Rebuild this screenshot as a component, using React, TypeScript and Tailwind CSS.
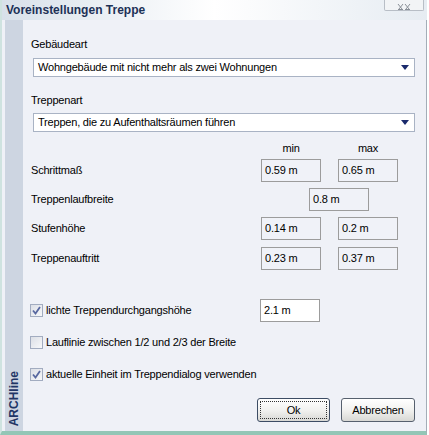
import React from "react";

function Select({ value }: { value: string }) {
  return (
    <div className="ml-[2px] flex h-[19px] w-[382px] items-center border border-[#a9b3c4] bg-white pl-[4px] pr-[5px]">
      <span className="flex-1 leading-[13px]">{value}</span>
      <svg width="8" height="5" viewBox="0 0 8 5">
        <path d="M0 0 H8 L4 5 Z" fill="#1a2a6c" />
      </svg>
    </div>
  );
}

function Box({ value, white, className }: { value: string; white?: boolean; className?: string }) {
  return (
    <div
      className={
        "flex h-[23px] w-[60px] items-center border border-[#9c9c9c] pl-[3px] leading-[13px] " +
        (white ? "bg-white " : "bg-[#f0f2f8] ") +
        (className ?? "")
      }
    >
      {value}
    </div>
  );
}

function Check({ checked, label }: { checked?: boolean; label: string }) {
  return (
    <div className="ml-[-1px] flex h-[13px] items-center gap-[3px]">
      <div className="flex h-[13px] w-[13px] items-center justify-center border border-[#a2acc0] bg-gradient-to-br from-[#dcdfe6] to-[#f7f8fa]">
        {checked && (
          <svg width="9" height="9" viewBox="0 0 9 9">
            <path d="M1 4.5 L3.5 7.5 L8 1" fill="none" stroke="#5868a0" strokeWidth="1.8" />
          </svg>
        )}
      </div>
      <span className="leading-[13px]">{label}</span>
    </div>
  );
}

export default function App() {
  return (
    <div className="h-[435px] w-[429px] bg-white font-['Liberation_Sans',Arial,sans-serif] text-[11px] tracking-[-0.2px] text-black">
      <div className="flex h-[435px] w-[427px] flex-col">
        {/* title bar */}
        <div className="relative h-[20px] border-l-2 border-[#cfe3e0] bg-gradient-to-r from-[#d8e1ea] via-white to-[#e6ecf2] pl-[4px] pt-[2px]">
          <span className="text-[12px] font-bold leading-[14px] tracking-normal text-[#1d3156]">Voreinstellungen Treppe</span>
          <div className="absolute right-[3px] top-0 flex h-[11px] w-[40px] items-end justify-center overflow-hidden rounded-b-[2px] border border-t-0 border-[#b8bec6] bg-[#f2f4f6]">
            <svg width="14" height="6" viewBox="0 0 14 6">
              <path d="M1 0 L5 5 M6 0 L2 5 M8 0 L12 5 M13 0 L9 5 M1 5.5 H6 M8 5.5 H13" stroke="#8a9098" strokeWidth="1" fill="none" />
            </svg>
          </div>
        </div>

        {/* body */}
        <div className="flex flex-1 border-b-[4px] border-l-2 border-r border-b-[#93c6b6] border-l-[#cfe3e0] border-r-[#a4adb8] bg-[#eff1f7] pl-[3px]">
          <div className="flex w-[18px] items-end justify-center bg-[#cdd5e1] pb-[5px]">
            <span className="rotate-180 text-[12px] font-bold leading-[13px] tracking-normal text-[#1f3566] [writing-mode:vertical-rl]">
              ARCHline
            </span>
          </div>

          <div className="flex flex-1 flex-col pl-[8px] pt-[18px]">
            <span className="leading-[13px]">Gebäudeart</span>
            <div className="mt-[7px]">
              <Select value="Wohngebäude mit nicht mehr als zwei Wohnungen" />
            </div>

            <span className="mt-[17px] leading-[13px]">Treppenart</span>
            <div className="mt-[6px]">
              <Select value="Treppen, die zu Aufenthaltsräumen führen" />
            </div>

            <div className="mt-[10px] flex leading-[13px]">
              <span className="ml-[230px] w-[60px] text-center">min</span>
              <span className="ml-[17px] w-[60px] text-center">max</span>
            </div>

            <div className="mt-[4px] flex items-center">
              <span className="w-[230px]">Schrittmaß</span>
              <Box value="0.59 m" />
              <Box value="0.65 m" className="ml-[17px]" />
            </div>
            <div className="mt-[6px] flex items-center">
              <span className="w-[230px]">Treppenlaufbreite</span>
              <Box value="0.8 m" className="ml-[48px]" />
            </div>
            <div className="mt-[6px] flex items-center">
              <span className="w-[230px]">Stufenhöhe</span>
              <Box value="0.14 m" />
              <Box value="0.2 m" className="ml-[17px]" />
            </div>
            <div className="mt-[7px] flex items-center">
              <span className="w-[230px]">Treppenauftritt</span>
              <Box value="0.23 m" />
              <Box value="0.37 m" className="ml-[17px]" />
            </div>

            <div className="mt-[29px] flex items-center">
              <div className="w-[229px]">
                <Check checked label="lichte Treppendurchgangshöhe" />
              </div>
              <Box value="2.1 m" white />
            </div>
            <div className="mt-[14px]">
              <Check label="Lauflinie zwischen 1/2 und 2/3 der Breite" />
            </div>
            <div className="mt-[19px]">
              <Check checked label="aktuelle Einheit im Treppendialog verwenden" />
            </div>

            <div className="mt-[17px] flex justify-end gap-[11px] pr-[11px]">
              <button className="flex h-[24px] w-[73px] items-center justify-center rounded-[3px] border border-[#3c4c64] bg-gradient-to-b from-white via-[#f2f2f0] to-[#d8d8d4] p-[2px]">
                <span className="flex h-full w-full items-center justify-center border border-dotted border-[#333]">Ok</span>
              </button>
              <button className="flex h-[24px] w-[74px] items-center justify-center rounded-[3px] border border-[#56606e] bg-gradient-to-b from-white via-[#f2f2f0] to-[#d8d8d4]">
                Abbrechen
              </button>
            </div>
          </div>
        </div>
      </div>
    </div>
  );
}
